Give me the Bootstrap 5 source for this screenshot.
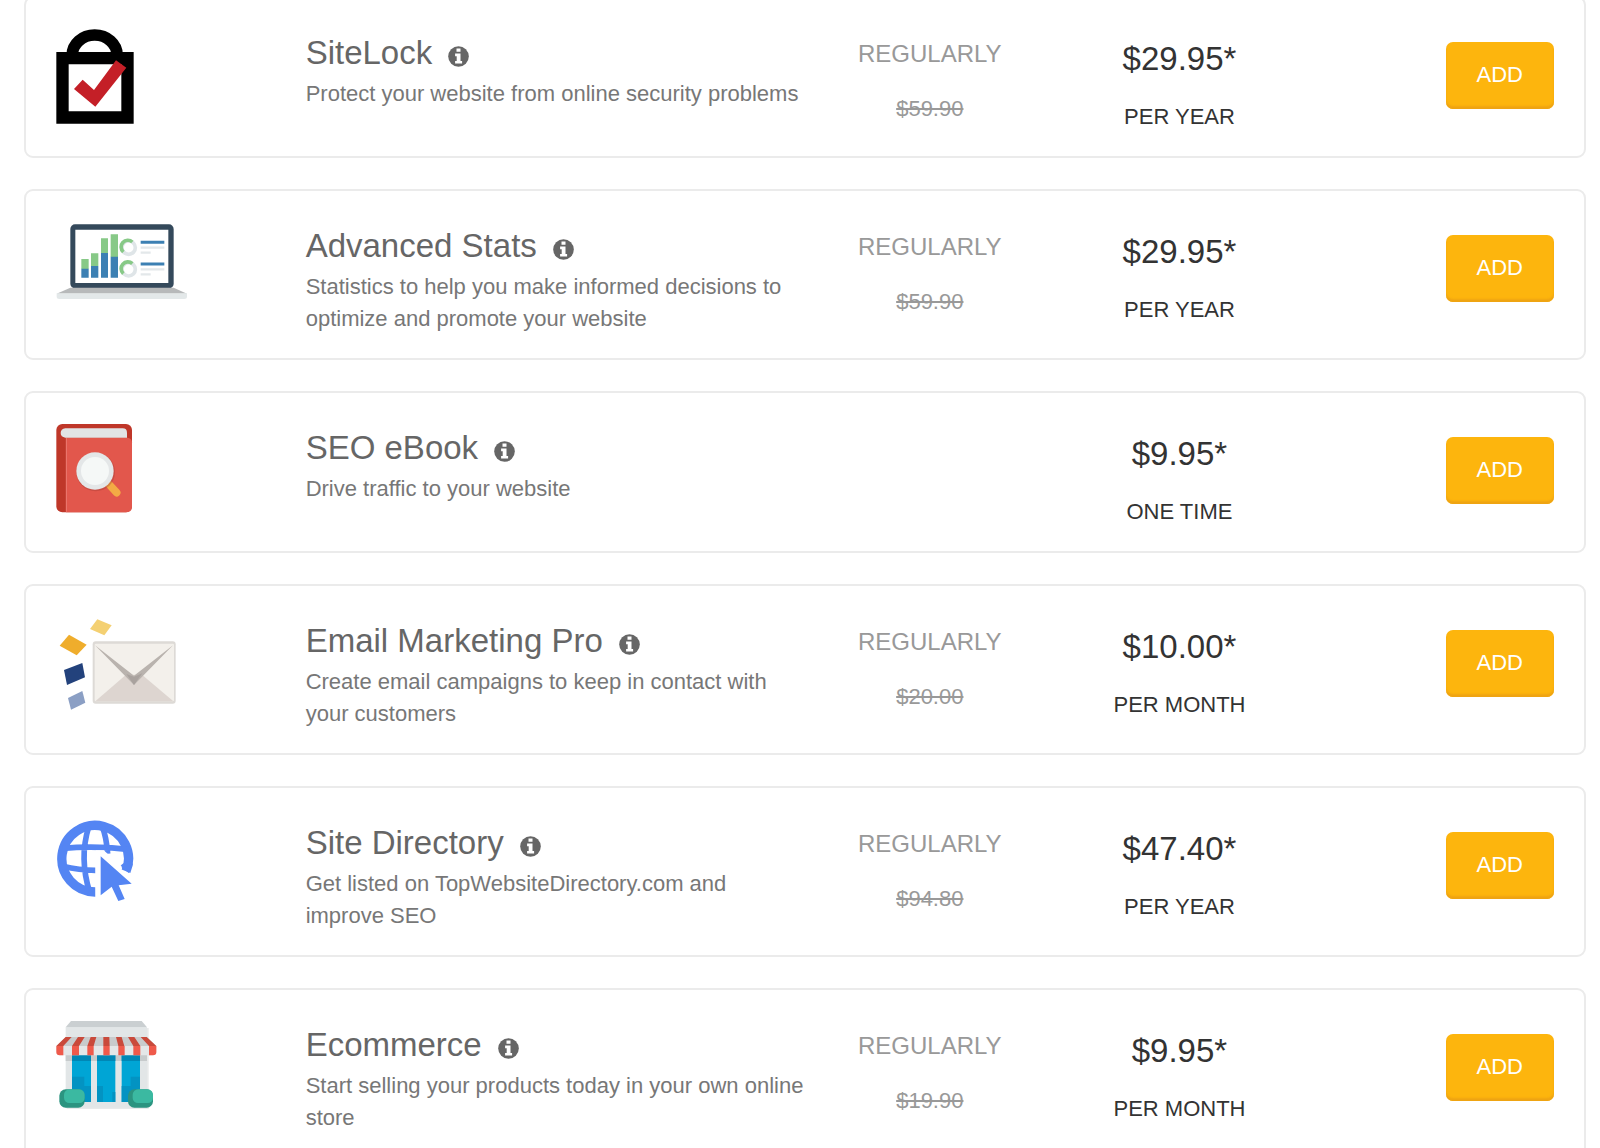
<!DOCTYPE html>
<html lang="en">
<head>
<meta charset="utf-8">
<meta name="viewport" content="width=device-width, initial-scale=1">
<title>Website add-ons</title>
<link href="https://cdn.jsdelivr.net/npm/bootstrap@5.3.0/dist/css/bootstrap.min.css" rel="stylesheet">
<style>
  body { font-family: Arial, "Liberation Sans", sans-serif; font-size: 22px; line-height: 33px; color: #333; background: #fff; overflow-x: hidden; }
  .addons { padding: 0 14px 0 24px; margin-top: -4px; gap: 31px; }
  .addon { border: 2px solid #ebebeb; border-radius: 9px; padding: 31px 30px 23px 30px; }
  .addon-title { font-size: 33px; line-height: 40px; font-weight: 400; color: #666; margin: 4px 0 5px; }
  .addon-info { background: none; border: 0; padding: 6px 0 0; line-height: 20px; color: #666; }
  .addon-text { color: #777; line-height: 32px; margin: 0; }
  .addon-was { color: #999; padding-top: 9px; }
  .addon-label { font-size: 24px; line-height: 32px; margin-bottom: 22px; }
  .addon-price { padding-top: 12px; }
  .addon-amount { font-size: 33px; line-height: 36px; margin-bottom: 23px; }
  .addon-action { padding-top: 13px; }
  .btn-add { background: #fdb50d; color: #fff; font-size: 22px; line-height: 33px; padding: 16px 31px 18px; border: 0; border-radius: 7px; box-shadow: inset 0 -3px 2px #efa412; }
  .btn-add:hover { background: #f0a50f; color: #fff; }
  .addon svg { display: block; }
</style>
</head>
<body>
<svg width="0" height="0" class="position-absolute" aria-hidden="true">
  <symbol id="info" viewBox="0 0 21 21"><circle cx="10.500" cy="10.500" r="10.300" fill="currentColor"/><path fill="#fff" d="M8.500 2.600h4v3.200h-4zM7.100 7.600h5.400v7.300h1.600v2.700H7.100v-2.700h1.600v-4.600H7.100z"/></symbol>
</svg>
<main class="addons d-flex flex-column">

  <article class="addon">
    <div class="row g-0">
      <div class="col-6 col-md-2">
        <svg width="78" height="95" viewBox="168 87 234 285" aria-hidden="true">
          <path fill="none" stroke="#000" stroke-width="35" d="M217 164a67 59 0 0 1 134 0"/>
          <path fill-rule="evenodd" d="M169 156h232v215H169zM206 193v141h158V193z"/>
          <path fill="#c41f27" d="M248 239l34 31 66-89 31 22-93 117-64-53z"/>
        </svg>
      </div>
      <div class="col-12 col-md-4">
        <h2 class="addon-title d-flex align-items-center">SiteLock<button class="addon-info ms-3" type="button" aria-label="About SiteLock"><svg width="21" height="21"><use href="#info"/></svg></button></h2>
        <p class="addon-text">Protect your website from online security problems</p>
      </div>
      <div class="addon-was col-4 col-md-2 text-center"><div class="addon-label">REGULARLY</div><s class="d-block">$59.90</s></div>
      <div class="addon-price col-4 col-md-2 text-center"><div class="addon-amount">$29.95*</div><div>PER YEAR</div></div>
      <div class="addon-action col-4 col-md-2 text-end"><button type="button" class="btn btn-add">ADD</button></div>
    </div>
  </article>

  <article class="addon">
    <div class="row g-0">
      <div class="col-6 col-md-2">
        <svg width="132" height="78" viewBox="48 36 396 234" aria-hidden="true">
          <rect x="91" y="43" width="310" height="192" rx="14" fill="#34495b"/>
          <path fill="#fff" d="M106 59h279v160H106z"/>
          <path fill="#b7b9ba" d="M91 233h310l40 18H50z"/><path fill="#e3e8e9" d="M50 250h391v11q0 6-8 6H58q-8 0-8-6z"/>
          <path fill="#87c987" d="M124 147h22v30h-22zM153 130h22v38h-22zM183 85h21v45h-21zM212 73h22v68h-22z"/>
          <path fill="#3c80b3" d="M124 176h22v27h-22zM153 168h22v35h-22zM183 129h21v74h-21zM212 140h22v63h-22z"/>
          <g fill="none" stroke-width="11"><circle cx="266" cy="113" r="20" stroke="#dfe5e8"/><circle cx="266" cy="178" r="20" stroke="#dfe5e8"/><path stroke="#87c987" d="M250 126a20 20 0 0 1 27-30M250 191a20 20 0 0 1 27-30"/></g>
          <path stroke="#3c80b3" stroke-width="9" d="M302 97h71M302 162h71"/>
          <path stroke="#e3e8ea" stroke-width="7" d="M302 113h71M302 128h30M302 178h71M302 193h30"/>
        </svg>
      </div>
      <div class="col-12 col-md-4">
        <h2 class="addon-title d-flex align-items-center">Advanced Stats<button class="addon-info ms-3" type="button" aria-label="About Advanced Stats"><svg width="21" height="21"><use href="#info"/></svg></button></h2>
        <p class="addon-text">Statistics to help you make informed decisions to optimize and promote your website</p>
      </div>
      <div class="addon-was col-4 col-md-2 text-center"><div class="addon-label">REGULARLY</div><s class="d-block">$59.90</s></div>
      <div class="addon-price col-4 col-md-2 text-center"><div class="addon-amount">$29.95*</div><div>PER YEAR</div></div>
      <div class="addon-action col-4 col-md-2 text-end"><button type="button" class="btn btn-add">ADD</button></div>
    </div>
  </article>

  <article class="addon">
    <div class="row g-0">
      <div class="col-6 col-md-2">
        <svg width="78" height="90" viewBox="48 42 234 270" aria-hidden="true">
          <rect x="49" y="42" width="227" height="265" rx="18" fill="#bf3729"/>
          <path fill="#e2574c" d="M78 83h184q14 2 14 14v192q0 18-18 18H78z"/>
          <path stroke="#ed7b72" stroke-width="3" d="M79 84v221"/>
          <path fill="#e2e4e5" d="M76 55h172q13 0 13 13v15H76q-14-2-14-14t14-14z"/>
          <path stroke="#f3aa45" stroke-width="23" stroke-linecap="round" d="M209 225l21 23"/>
          <circle cx="167" cy="186" r="58" fill="#9d3931" opacity=".35"/>
          <circle cx="165" cy="183" r="56" fill="#e4e7e8"/><circle cx="165" cy="183" r="42" fill="#f5f8f7"/>
        </svg>
      </div>
      <div class="col-12 col-md-4">
        <h2 class="addon-title d-flex align-items-center">SEO eBook<button class="addon-info ms-3" type="button" aria-label="About SEO eBook"><svg width="21" height="21"><use href="#info"/></svg></button></h2>
        <p class="addon-text">Drive traffic to your website</p>
      </div>
      <div class="addon-was col-4 col-md-2"></div>
      <div class="addon-price col-4 col-md-2 text-center"><div class="addon-amount">$9.95*</div><div>ONE TIME</div></div>
      <div class="addon-action col-4 col-md-2 text-end"><button type="button" class="btn btn-add">ADD</button></div>
    </div>
  </article>

  <article class="addon">
    <div class="row g-0">
      <div class="col-6 col-md-2">
        <svg width="122" height="94" viewBox="48 36 366 282" aria-hidden="true">
          <path fill="#f4d072" d="M172 43l43 18-22 30-43-19z"/><path fill="#efad2c" d="M87 89l53 30-30 32-51-29z"/>
          <path fill="#23427c" d="M72 195l55-21 8 43-54 23z"/><path fill="#8b9fc4" d="M84 279l43-21 9 35-43 21z"/>
          <rect x="158" y="109" width="249" height="187" rx="9" fill="#dddad6"/>
          <rect x="164" y="116" width="238" height="173" rx="4" fill="#f3f0eb"/>
          <path fill="#ddd5d0" d="M166 289l92-80h48l94 80z"/>
          <path fill="#b9b3ae" d="M165 121l117 91 117-91-117 119z"/><path fill="#a9a29e" d="M259 207l23 8 25-10-25 35z"/>
        </svg>
      </div>
      <div class="col-12 col-md-4">
        <h2 class="addon-title d-flex align-items-center">Email Marketing Pro<button class="addon-info ms-3" type="button" aria-label="About Email Marketing Pro"><svg width="21" height="21"><use href="#info"/></svg></button></h2>
        <p class="addon-text">Create email campaigns to keep in contact with your customers</p>
      </div>
      <div class="addon-was col-4 col-md-2 text-center"><div class="addon-label">REGULARLY</div><s class="d-block">$20.00</s></div>
      <div class="addon-price col-4 col-md-2 text-center"><div class="addon-amount">$10.00*</div><div>PER MONTH</div></div>
      <div class="addon-action col-4 col-md-2 text-end"><button type="button" class="btn btn-add">ADD</button></div>
    </div>
  </article>

  <article class="addon">
    <div class="row g-0">
      <div class="col-6 col-md-2">
        <svg width="80" height="84" viewBox="48 42 240 252" aria-hidden="true">
          <g fill="none" stroke="#5485f3"><path stroke-width="28" d="M166 261A100 100 0 1 1 258 199"/>
          <path stroke-width="17" d="M68 130q97-9 196 3M68 184q50 12 98 12M146 66q-29 93 3 196M187 66q12 29 16 80"/></g>
          <path fill="#5485f3" d="M240 183l26 21 13-28-20-8z"/>
          <path fill="#fff" d="M167 136l24 0 54 48-5 14-56-30-2 106-15 2z"/>
          <path fill="#5485f3" d="M182 154l93 82-39 5 18 41-19 6-20-43-33 26z"/>
        </svg>
      </div>
      <div class="col-12 col-md-4">
        <h2 class="addon-title d-flex align-items-center">Site Directory<button class="addon-info ms-3" type="button" aria-label="About Site Directory"><svg width="21" height="21"><use href="#info"/></svg></button></h2>
        <p class="addon-text">Get listed on TopWebsiteDirectory.com and improve SEO</p>
      </div>
      <div class="addon-was col-4 col-md-2 text-center"><div class="addon-label">REGULARLY</div><s class="d-block">$94.80</s></div>
      <div class="addon-price col-4 col-md-2 text-center"><div class="addon-amount">$47.40*</div><div>PER YEAR</div></div>
      <div class="addon-action col-4 col-md-2 text-end"><button type="button" class="btn btn-add">ADD</button></div>
    </div>
  </article>

  <article class="addon">
    <div class="row g-0">
      <div class="col-6 col-md-2">
        <svg width="102" height="88" viewBox="48 48 306 264" aria-hidden="true">
          <path fill="#d2d5d6" d="M80 69h246v243H80z" opacity=".5"/>
          <path fill="#e2e6e7" d="M77 67h244v241H77z"/><path fill="#cacfd1" d="M93 48h212l16 19H77z"/>
          <path fill="#c7cbcc" d="M77 150h244v18H77z"/>
          <path fill="#00a5d5" d="M96 150h57v141H96zM171 150h55v141h-55zM245 150h55v141h-55z"/>
          <path fill="#0087b5" d="M96 150h57v18H96zM171 150h55v18h-55zM245 150h55v18h-55z"/>
          <path fill="#0393c2" d="M96 215h37v28h20v48H96zM171 243h18v48h-18zM217 261h9v30h-9zM245 243h27v-28h28v76h-55z"/>
          <path fill="#c8cbcc" d="M77 96h244l28 28H49z"/><path fill="#e4e7e8" d="M49 123h300v19q-2 9-10 9H59q-9 0-10-9z"/>
          <path fill="#c94a3b" d="M77 96h18l-25 27H49zM114 96h20l-17 27H96zM152 96h17l-8 27h-19zM190 96h18l1 27h-19zM228 96h17l8 27h-18zM264 96h19l18 27h-21zM302 96h18l29 27h-22z"/>
          <path fill="#ef5a4b" d="M49 123h21v28H59q-10 0-10-10zM96 123h21v28H96zM142 123h19v28h-19zM190 123h19v28h-19zM235 123h19v28h-19zM280 123h21v28h-21zM327 123h22v18q0 10-10 10h-12z"/>
          <rect x="58" y="253" width="76" height="55" rx="19" fill="#2b9480"/><rect x="72" y="253" width="62" height="41" rx="16" fill="#3bb9a1"/>
          <rect x="264" y="253" width="75" height="55" rx="19" fill="#2b9480"/><rect x="278" y="253" width="61" height="41" rx="16" fill="#3bb9a1"/>
        </svg>
      </div>
      <div class="col-12 col-md-4">
        <h2 class="addon-title d-flex align-items-center">Ecommerce<button class="addon-info ms-3" type="button" aria-label="About Ecommerce"><svg width="21" height="21"><use href="#info"/></svg></button></h2>
        <p class="addon-text">Start selling your products today in your own online store</p>
      </div>
      <div class="addon-was col-4 col-md-2 text-center"><div class="addon-label">REGULARLY</div><s class="d-block">$19.90</s></div>
      <div class="addon-price col-4 col-md-2 text-center"><div class="addon-amount">$9.95*</div><div>PER MONTH</div></div>
      <div class="addon-action col-4 col-md-2 text-end"><button type="button" class="btn btn-add">ADD</button></div>
    </div>
  </article>

</main>
<script src="https://cdn.jsdelivr.net/npm/bootstrap@5.3.0/dist/js/bootstrap.bundle.min.js"></script>
</body>
</html>
